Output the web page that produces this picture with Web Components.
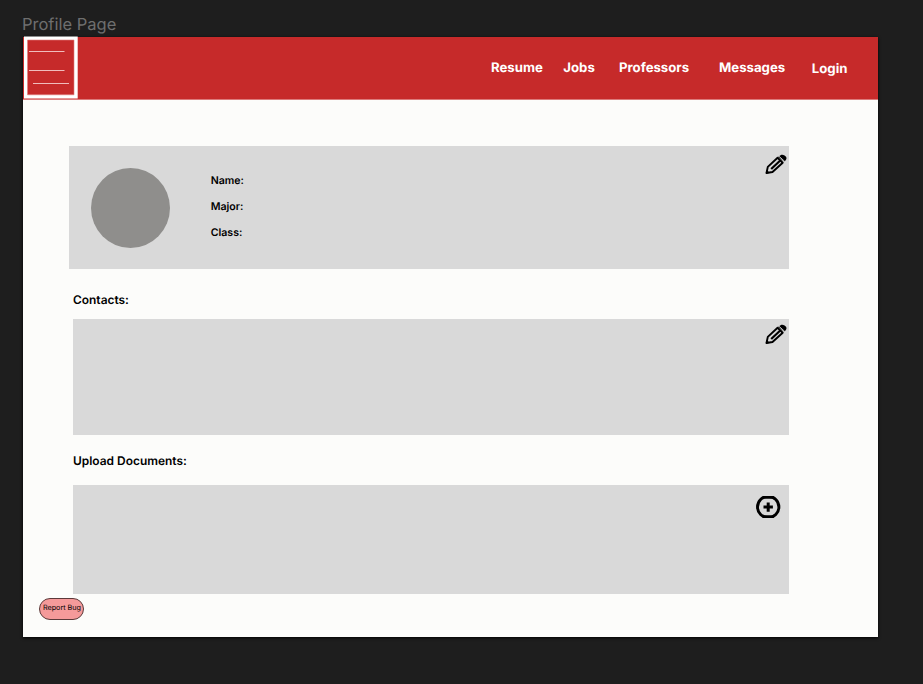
<!DOCTYPE html>
<html lang="en">
<head>
<meta charset="utf-8">
<title>Profile Page</title>
<style>
html,body{margin:0;height:100%;background:#1e1e1e;overflow:hidden}
body{font-family:Inter,"Liberation Sans",sans-serif;color:#000;text-rendering:geometricPrecision}
</style>
</head>
<body>
<profile-canvas></profile-canvas>
<script>
const define = (name, html) => customElements.define(name, class extends HTMLElement {
  constructor() {
    super();
    const t = document.createElement('template');
    t.innerHTML = html;
    this.attachShadow({mode: 'open'}).append(t.content.cloneNode(true));
  }
});

define('menu-button', `<style>
:host{display:block;width:54px;height:63px}
svg{display:block}
</style><svg width="54" height="63" viewBox="0 0 54 63" fill="none"><path d="M0 .5H53.7V62.6H0Z" fill="#fff"/><path d="M3.5 4H50V58.8H3.5Z" fill="#c62a2a" stroke="#e08080" stroke-width=".6"/><path d="M5 15.5H40.5M5 34.5H40.5M9 47.5H45" stroke="#f0bcbc"/></svg>`);

define('nav-link', `<style>
:host{display:block;font-size:13.2px;line-height:16px;font-weight:700;color:#fff;white-space:nowrap}
</style><slot></slot>`);

define('site-header', `<style>
:host{display:flex;box-sizing:border-box;height:62.5px;background:#c62a2a;border-bottom:1px solid #dc7b7b;padding-left:1px}
menu-button{margin-top:-1px}
nav{display:grid;grid-template-columns:72.3px 55.7px 100px 92.8px auto;margin-left:413px;padding-top:23px}
nav-link:last-child{padding-top:1px}
</style><menu-button></menu-button><nav><nav-link>Resume</nav-link><nav-link>Jobs</nav-link><nav-link>Professors</nav-link><nav-link>Messages</nav-link><nav-link>Login</nav-link></nav>`);

define('pencil-icon', `<style>
:host{display:block;width:22px;height:21px}svg{display:block}
</style><svg width="22" height="21" viewBox="0 0 22 21" fill="none" stroke="#000" stroke-linejoin="round"><path d="M12.6 3.7 2.8 12.9 1.5 19 7.5 18 17.7 8.7Z" stroke-width="1.9"/><path d="M6.2 15 15 6.7" stroke-width="2.2"/><path d="M1 19.4 1.9 16.2 4.3 18.7Z" fill="#000" stroke-width=".4"/><path d="M14.1 2.3C15.7.4 17.7.2 19.6 1.5 21.8 3.1 22.1 4.6 20.5 6.4L19.2 7.6 13.3 3.1Z" fill="#000" stroke="none"/><path d="M14 2.3 19.7 7.4" stroke="#d9d9d9" stroke-width=".9"/></svg>`);

define('add-icon', `<style>
:host{display:block;width:25px;height:22px}svg{display:block}
</style><svg width="25" height="22" viewBox="0 0 25 22" fill="none" stroke="#000"><circle cx="12.2" cy="11" r="10.7" stroke-width="2.9"/><path d="M6.5 1.6H18M6.5 20.4H18" stroke-width="2.3"/><path d="M12.2 6.4V15.8M7.5 11.1H16.9" stroke-width="3"/></svg>`);

define('content-panel', `<style>
:host{display:flex;box-sizing:border-box;background:#d9d9d9}
.body{flex:1}
</style><div class="body"><slot></slot></div><slot name="action"></slot>`);

define('section-title', `<style>
:host{display:block;font-size:11.95px;line-height:16px;font-weight:600;white-space:nowrap}
</style><slot></slot>`);

define('profile-details', `<style>
:host{display:flex;padding:22px 0 0 22px}
.avatar{width:79px;height:80px;border-radius:50%;background:#8f8e8c}
.fields{display:grid;grid-auto-rows:26px;margin:0 0 0 40.7px;font-size:10.6px;font-weight:600;align-items:center}
</style><div class="avatar"></div><div class="fields"><span>Name:</span><span>Major:</span><span>Class:</span></div>`);

define('report-button', `<style>
:host{display:flex;box-sizing:border-box;width:45px;height:22px;border:1px solid #5c3a3a;border-radius:11px;background:#f59a9a;align-items:center;justify-content:center;font-size:7.2px;line-height:10px;white-space:nowrap;padding:0 0 1px 1px}
</style><slot></slot>`);

define('profile-page', `<style>
:host{display:block;box-sizing:border-box;width:855px;height:600px;background:#fcfcfa;box-shadow:0 1px 3px #000}
main{display:flex;flex-direction:column;padding:46.3px 89px 0 50px}
.profile{height:123.5px;margin-left:-4px}
.contacts{height:116.5px;margin-top:11px}
.documents{height:109.5px;margin-top:16px}
section-title{margin-top:22.5px}
.second{margin-top:17.5px}
pencil-icon{margin:8px 2px 0 0}
.contacts pencil-icon{margin-top:5px}
add-icon{margin:11px 8.5px 0 0}
report-button{margin:3.5px 0 0 -34px}
</style><site-header></site-header><main>
<content-panel class="profile"><profile-details></profile-details><pencil-icon slot="action"></pencil-icon></content-panel>
<section-title>Contacts:</section-title>
<content-panel class="contacts"><pencil-icon slot="action"></pencil-icon></content-panel>
<section-title class="second">Upload Documents:</section-title>
<content-panel class="documents"><add-icon slot="action"></add-icon></content-panel>
<report-button>Report Bug</report-button>
</main>`);

define('profile-canvas', `<style>
:host{display:block;padding:13px 0 0 23px}
.label{font-size:16.5px;line-height:23px;height:24px;color:#6e6e6e;margin-left:-1px}
</style><div class="label">Profile Page</div><profile-page></profile-page>`);
</script>
</body>
</html>
